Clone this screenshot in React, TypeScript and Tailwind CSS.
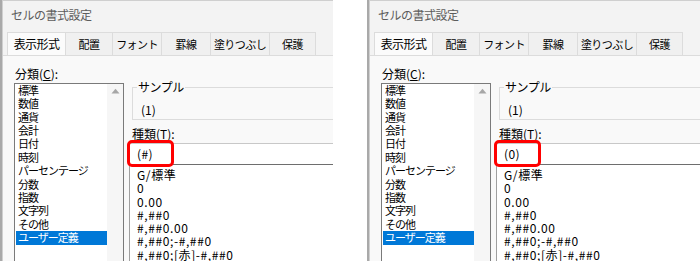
import React from "react";

const categories = [
  "標準",
  "数値",
  "通貨",
  "会計",
  "日付",
  "時刻",
  "パーセンテージ",
  "分数",
  "指数",
  "文字列",
  "その他",
  "ユーザー定義",
];

const formats = [
  "G/標準",
  "0",
  "0.00",
  "#,##0",
  "#,##0.00",
  "#,##0;-#,##0",
  "#,##0;[赤]-#,##0",
];

const tabs = [
  { label: "表示形式", w: "w-[59px]" },
  { label: "配置", w: "w-[47px]" },
  { label: "フォント", w: "w-[49px]" },
  { label: "罫線", w: "w-[49px]" },
  { label: "塗りつぶし", w: "w-[59px]" },
  { label: "保護", w: "w-[46px]" },
];

const font = "font-['Noto_Sans_CJK_JP','Noto_Sans',sans-serif]";

function FormatDialog({ typed }: { typed: string }) {
  return (
    <div className={`w-[333px] h-[261px] overflow-hidden flex bg-[#a9a9a9] ${font}`}>
      <div className="w-[2px] shrink-0" />
      {/* dialog */}
      <div className="flex-1 flex flex-col bg-[#f3f3f3] border-l border-t border-[#cfcfcf] text-[11px] text-black">
        {/* title */}
        <div className="h-[34px] pl-[8px] pt-[5px] text-[12px] text-[#5c5c5c] tracking-[-0.5px]">
          セルの書式設定
        </div>

        {/* tabs */}
        <div className="flex pl-[4px] h-[23px] items-end">
          {tabs.map((t, i) => (
            <div
              key={t.label}
              className={`${t.w} h-[23px] flex items-center justify-center border-t border-r border-[#dcdcdc] tracking-[-0.6px] ${
                i === 0 ? "bg-[#fbfbfb] border-l text-[12px] h-[24px] mb-[-1px]" : "bg-[#f0f0f0]"
              }`}
            >
              {t.label}
            </div>
          ))}
        </div>

        {/* content pane */}
        <div className="flex-1 bg-[#f9f9f9] border-t border-[#dcdcdc] flex pl-[11px] pt-[8px]">
          {/* category list */}
          <div className="w-[110px] shrink-0 flex flex-col">
            <div className="h-[19px] leading-[19px] text-[12px] pl-[1px]">
              分類(<span className="underline">C</span>):
            </div>
            <div className="flex-1 flex bg-white border border-[#7a7a7a] border-b-0">
              <div className="flex-1 pl-[1px]">
                {categories.map((c) => (
                  <div
                    key={c}
                    className={`h-[13.4px] leading-[13.4px] pl-[2px] whitespace-nowrap tracking-[-1px] ${
                      c === "ユーザー定義" ? "bg-[#0078d7] text-white" : ""
                    }`}
                  >
                    {c}
                  </div>
                ))}
              </div>
              <div className="w-[16px] shrink-0 bg-[#f6f6f6] flex justify-center pt-[4px]">
                <svg width="9" height="6" viewBox="0 0 9 6">
                  <path d="M0.5 5.5 L4.5 0.8 L8.5 5.5 Z" fill="#a6a6a6" />
                </svg>
              </div>
            </div>
          </div>

          {/* right column */}
          <div className="flex-1 flex flex-col pl-[8px]">
            {/* sample */}
            <div className="mt-[23px] h-[33px] border border-r-0 border-[#dcdcdc] pl-[8px] relative">
              <div className="absolute top-[-9px] left-[4px] px-[1px] bg-[#f9f9f9] text-[12px] leading-[16px] tracking-[-0.5px]">
                サンプル
              </div>
              <div className="pt-[14px] text-[12px] leading-[16px]">(1)</div>
            </div>

            <div className="mt-[5px] h-[18px] leading-[18px] text-[12px]">
              種類(<span className="underline">T</span>):
            </div>

            {/* type input */}
            <div className="relative ml-[-3px]">
              <div className="h-[22px] bg-white border border-[#c8c8c8] border-b-[#6e6e6e] border-r-0 pl-[7px] flex items-center text-[12px] tracking-[0.4px]">
                {typed}
              </div>
              <div className="absolute left-[-2px] top-[-3px] w-[47px] h-[27px] border-[3px] border-[#ff0000] rounded-[5px]" />
            </div>

            {/* format list */}
            <div className="flex-1 bg-white border-l border-[#a0a0a0] ml-[-3px] pl-[7px] pt-[3px] text-[12px] tracking-[0.6px]">
              {formats.map((f) => (
                <div key={f} className="h-[13.3px] leading-[13.3px] whitespace-nowrap">
                  {f}
                </div>
              ))}
            </div>
          </div>
        </div>
      </div>
    </div>
  );
}

export default function App() {
  return (
    <div className="w-[700px] h-[261px] bg-white flex gap-[34px] overflow-hidden">
      <FormatDialog typed="(#)" />
      <FormatDialog typed="(0)" />
    </div>
  );
}
